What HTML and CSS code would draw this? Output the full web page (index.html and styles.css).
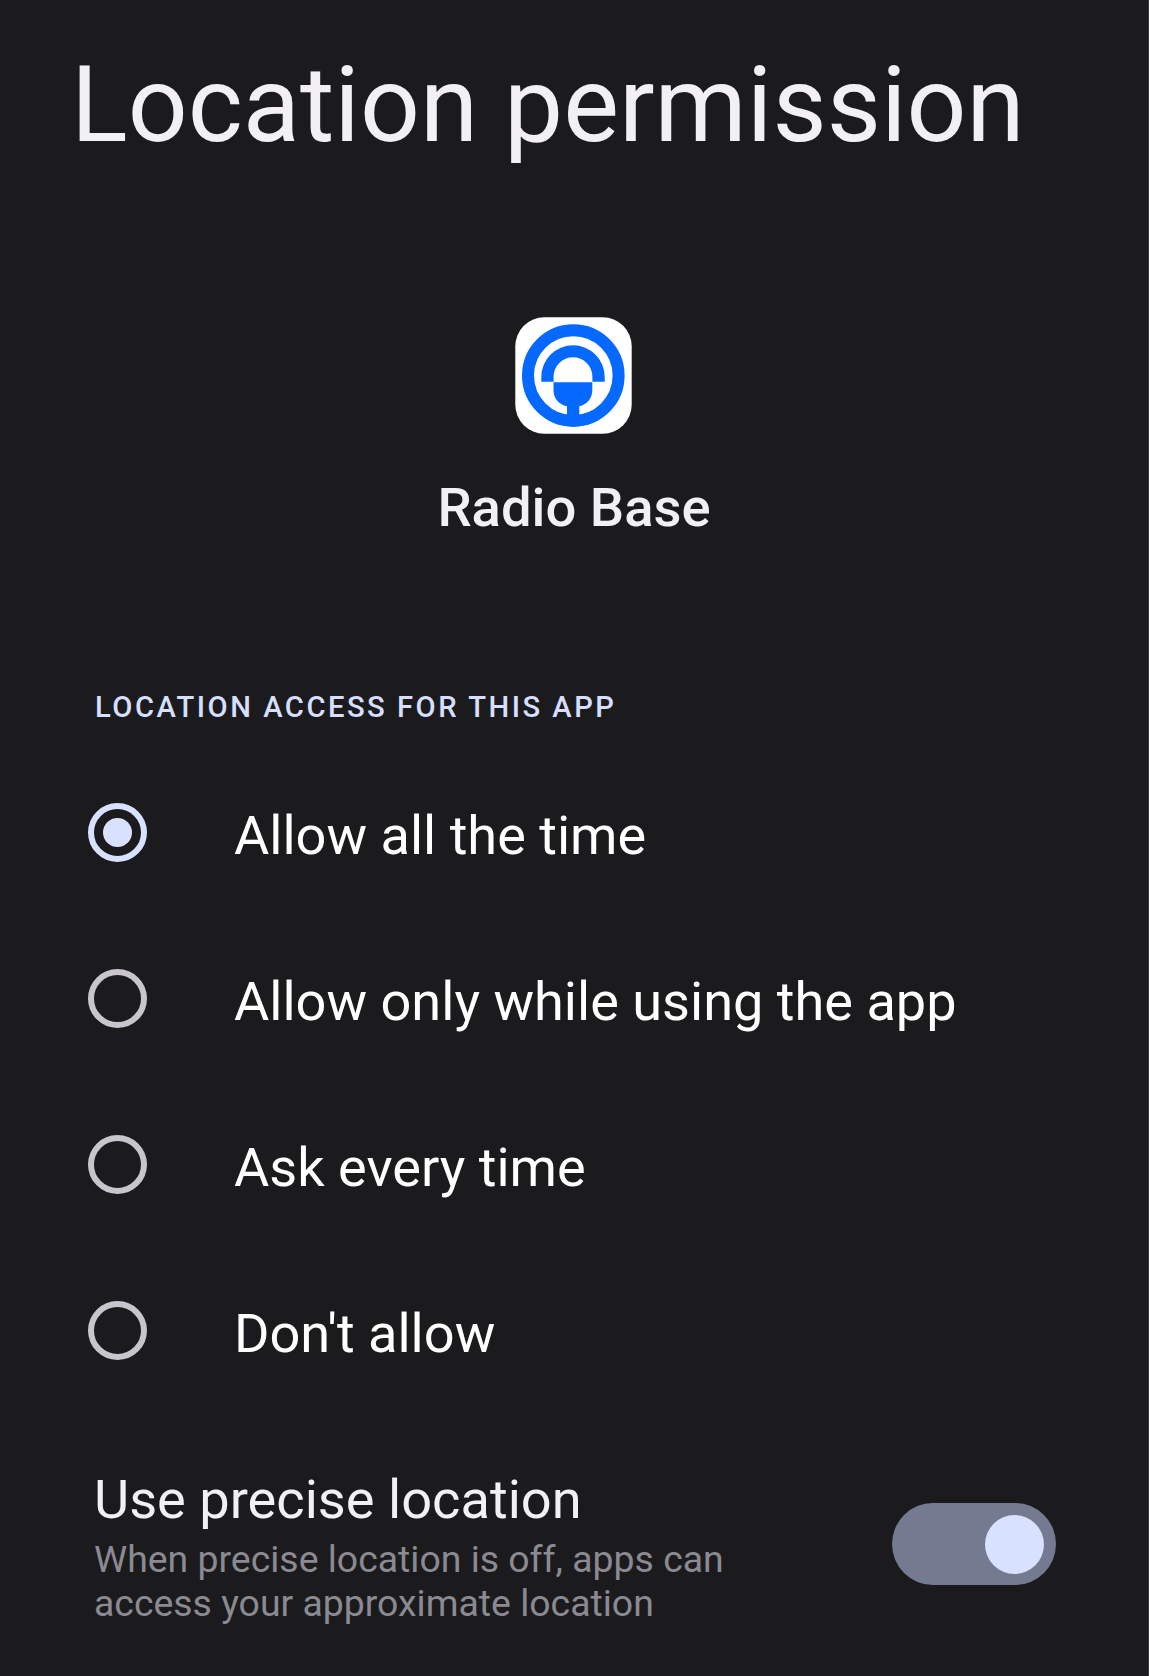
FILE: index.html
```html
<!DOCTYPE html>
<html lang="en">
<head>
<meta charset="utf-8">
<title>Location permission</title>
<link rel="stylesheet" href="styles.css">
</head>
<body>
<main class="screen">
  <h1 class="title">Location permission</h1>
  <section class="app">
    <svg class="app-icon" viewBox="0 0 117 117" aria-hidden="true">
      <rect x=".3" y=".3" width="116.400" height="116.400" rx="29" fill="#fff"/>
      <circle cx="58.300" cy="58.600" r="45.300" fill="none" stroke="#0568ff" stroke-width="12"/>
      <path d="M26.300 64.700V60a31.700 31.700 0 0 1 63.400 0v4.700H77.400V59.700a19.400 19.400 0 0 0-38.800 0V64.700z" fill="#0568ff"/>
      <path d="M38.500 65.200h38.800V73c0 8-5 14.500-13 16.300V100H52V89.300C43.500 87.500 38.500 81 38.500 73z" fill="#0568ff"/>
    </svg>
    <h2 class="app-name">Radio Base</h2>
  </section>
  <h3 class="section-label">LOCATION ACCESS FOR THIS APP</h3>
  <div class="options" role="radiogroup">
    <div class="option" role="radio" aria-checked="true"><span class="radio radio-checked"></span><span class="option-text">Allow all the time</span></div>
    <div class="option" role="radio" aria-checked="false"><span class="radio"></span><span class="option-text">Allow only while using the app</span></div>
    <div class="option" role="radio" aria-checked="false"><span class="radio"></span><span class="option-text">Ask every time</span></div>
    <div class="option" role="radio" aria-checked="false"><span class="radio"></span><span class="option-text">Don't allow</span></div>
  </div>
  <section class="precise">
    <div class="precise-text">
      <div class="precise-title">Use precise location</div>
      <div class="precise-note">When precise location is off, apps can<br>access your approximate location</div>
    </div>
    <div class="switch" role="switch" aria-checked="true"><span class="thumb"></span></div>
  </section>
</main>
</body>
</html>
```
FILE: styles.css
```css
* { box-sizing: border-box; }
body {
  margin: 0;
  background: #1b1b1d;
  font-family: Roboto, "Liberation Sans", sans-serif;
  color: #f2f0f4;
}
.screen {
  height: 1676px;
  overflow: hidden;
  display: flex;
  flex-direction: column;
  border-right: 1px solid #39393b;
}
.title {
  margin: 42px 0 0 71px;
  font-size: 105.2px;
  line-height: 126px;
  font-weight: 400;
  white-space: nowrap;
}
.app {
  margin-top: 149px;
  display: flex;
  flex-direction: column;
  align-items: center;
}
.app-icon { width: 117px; height: 117px; margin-right: 1px; }
.app-name {
  margin: 42px 0 0;
  font-size: 54.4px;
  line-height: 64px;
  font-weight: 500;
}
.section-label {
  margin: 148px 0 0 95px;
  font-size: 29.2px;
  line-height: 38px;
  font-weight: 500;
  letter-spacing: 2.5px;
  color: #d6dfff;
}
.options { margin-top: 23px; }
.option {
  height: 166px;
  padding-left: 87.5px;
  display: flex;
  align-items: center;
  color: #fff;
}
.radio {
  width: 59px;
  height: 59px;
  border: 6px solid #c8c5cd;
  border-radius: 50%;
  display: grid;
  place-items: center;
}
.radio-checked { border-color: #d8e1ff; }
.radio-checked::after {
  content: "";
  width: 29px;
  height: 29px;
  border-radius: 50%;
  background: #d8e1ff;
}
.option-text {
  margin: 8px 0 0 87.5px;
  font-size: 54.1px;
  line-height: 64px;
}
.precise {
  margin-top: 55px;
  padding: 0 92.5px 0 94px;
  display: flex;
  justify-content: space-between;
}
.precise-title { font-size: 54.2px; line-height: 64px; }
.precise-note {
  margin-top: 5px;
  font-size: 37.4px;
  line-height: 44px;
  color: #8b8a92;
}
.switch {
  width: 164px;
  height: 82px;
  margin-top: 35px;
  padding: 0 12px;
  border-radius: 41px;
  background: #747a8f;
  display: flex;
  align-items: center;
  justify-content: flex-end;
}
.thumb {
  width: 59px;
  height: 59px;
  border-radius: 50%;
  background: #d8e1ff;
}
```
